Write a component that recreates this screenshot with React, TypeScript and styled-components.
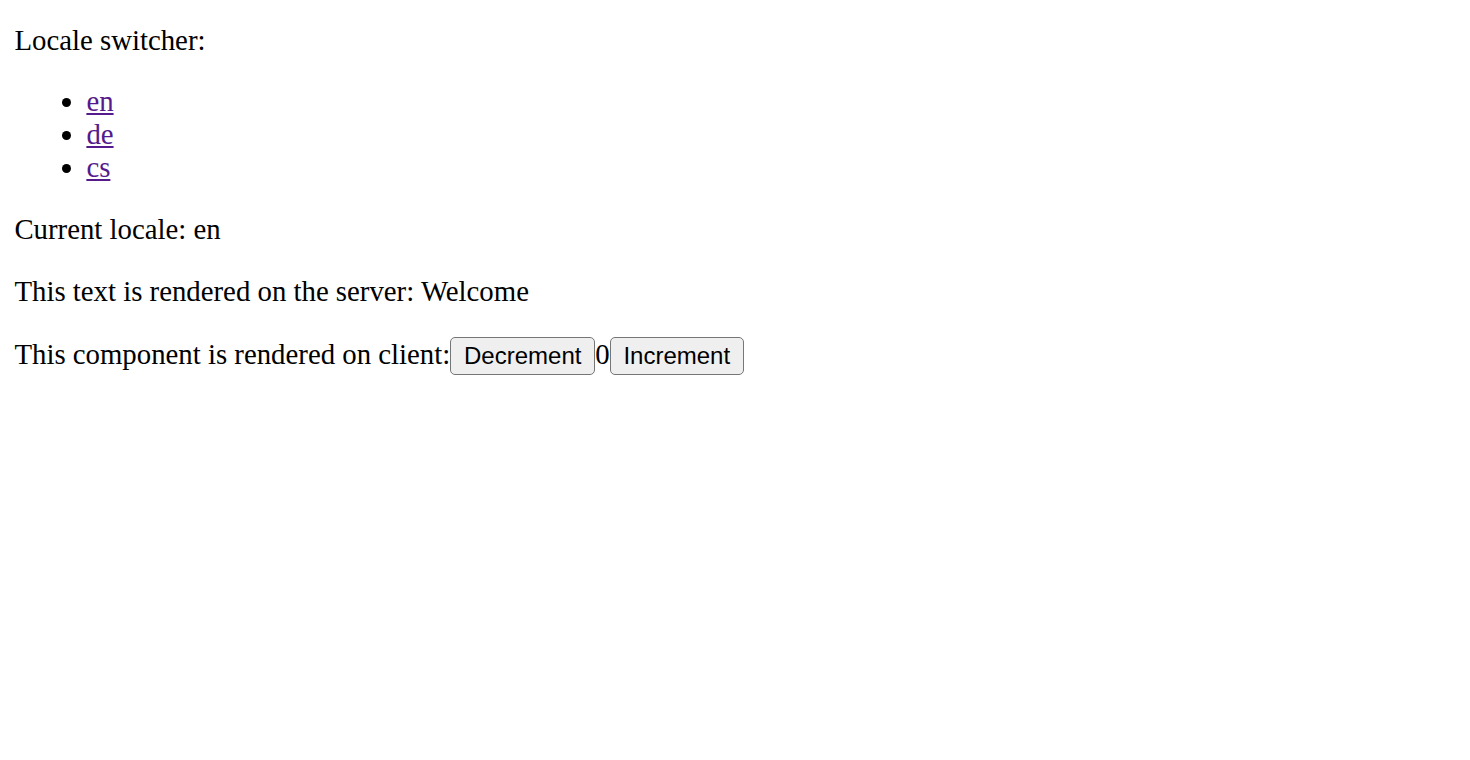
import React, { useState } from 'react';
import styled, { createGlobalStyle } from 'styled-components';

const locales = ['en', 'de', 'cs'];

const GlobalStyle = createGlobalStyle`
  html, body {
    margin: 0;
    background: #fff;
  }
  body {
    font-family: 'Liberation Serif', 'Times New Roman', serif;
    font-size: 28.8px;
    color: #000;
  }
`;

const Page = styled.main`
  display: flow-root;
  padding: 0 14.4px;
`;

const Paragraph = styled.p`
  margin: 28.8px 0;

  &:first-child {
    margin-top: 23.5px;
  }
`;

const LocaleList = styled.ul`
  margin: 28.8px 0;
  padding-left: 72px;
  list-style: disc;
`;

const LocaleLink = styled.a`
  color: #551a8b;
  text-decoration: underline;
  cursor: pointer;
`;

const CounterButton = styled.button`
  font-family: 'Liberation Sans', Arial, sans-serif;
  font-size: 24px;
  color: #000;
  background: #efefef;
  border: 1px solid #767676;
  border-radius: 5px;
  padding: 4.4px 12.8px;
  margin: 0;
  cursor: pointer;

  &:hover {
    background: #e5e5e5;
  }
`;

const Counter = () => {
  const [count, setCount] = useState(0);
  return (
    <>
      <CounterButton onClick={() => setCount(c => c - 1)}>Decrement</CounterButton>
      {count}
      <CounterButton onClick={() => setCount(c => c + 1)}>Increment</CounterButton>
    </>
  );
};

const App: React.FC = () => {
  const [locale, setLocale] = useState('en');

  return (
    <Page>
      <GlobalStyle />
      <Paragraph>Locale switcher:</Paragraph>
      <LocaleList>
        {locales.map(l => (
          <li key={l}>
            <LocaleLink href={`#${l}`} onClick={() => setLocale(l)}>{l}</LocaleLink>
          </li>
        ))}
      </LocaleList>
      <Paragraph>Current locale: {locale}</Paragraph>
      <Paragraph>This text is rendered on the server: Welcome</Paragraph>
      <Paragraph>
        This component is rendered on client:<Counter />
      </Paragraph>
    </Page>
  );
};

export default App;
